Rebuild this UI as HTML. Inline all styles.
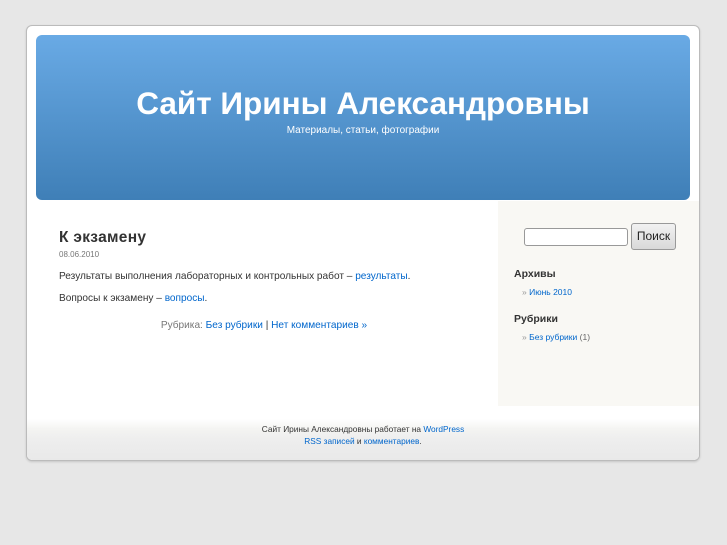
<!DOCTYPE html>
<html><head><meta charset="utf-8"><style>
body{margin:0;background:#e7e7e7;font-family:"Liberation Sans","DejaVu Sans",sans-serif;width:727px;height:545px;overflow:hidden;position:relative}
#page{position:absolute;left:26px;top:25px;width:672px;height:434px;background:#fff;border:1px solid #bbb;border-radius:6px;box-shadow:0 1px 2px rgba(0,0,0,.15);overflow:hidden}
#header{position:absolute;left:9px;top:9px;width:654px;height:165px;border-radius:6px;background:linear-gradient(#69aae5,#3f7fb7)}
#header h1{margin:0;position:absolute;top:50px;width:100%;text-align:center;color:#fff;font-size:31.5px;font-weight:bold}
#header .d{position:absolute;top:90px;width:100%;text-align:center;color:#fff;font-size:10px}
#side{position:absolute;left:471px;top:175px;width:201px;height:205px;background:#f9f8f4}
#foot{position:absolute;left:0;top:393px;width:672px;height:41px;background:linear-gradient(#fff 0,#f4f4f2 10px,#eee 20px,#e9e9e9);font-size:8.3px;text-align:center;color:#333;line-height:12px;padding-top:4px;box-sizing:border-box}
a{color:#0066cc;text-decoration:none}
.c{position:absolute;font-size:10.1px;color:#333}
h2{position:absolute;margin:0;font-size:15.5px;color:#333;left:32px;top:203px;letter-spacing:.3px}
h3{position:absolute;margin:0;font-size:10.5px;color:#333}
</style></head><body>
<div id="page">
<div id="header"><h1>Сайт Ирины Александровны</h1><div class="d">Материалы, статьи, фотографии</div></div>
<h2>К экзамену</h2>
<div class="c" style="left:32px;top:224px;font-size:8px;color:#777">08.06.2010</div>
<div class="c" style="left:32px;top:245px">Результаты выполнения лабораторных и контрольных работ – <a>результаты</a>.</div>
<div class="c" style="left:32px;top:267px">Вопросы к экзамену – <a>вопросы</a>.</div>
<div class="c" style="left:32px;width:410px;text-align:center;top:294px;color:#777">Рубрика: <a>Без рубрики</a> <span style="color:#333">|</span> <a>Нет комментариев »</a></div>
<div id="side">
<div style="position:absolute;left:26px;top:27px;width:102px;height:16px;border:1px solid #999;border-radius:3px;background:#fff"></div>
<div style="position:absolute;left:133px;top:22px;width:43px;height:25px;border:1px solid #999;border-radius:3px;background:linear-gradient(#f2f2f2,#d9d9d9);font-size:12px;line-height:25px;text-align:center;color:#222">Поиск</div>
<h3 style="left:16px;top:67px">Архивы</h3>
<div class="c" style="left:24px;top:86px;font-size:8.5px"><span style="color:#999">»</span> <a>Июнь 2010</a></div>
<h3 style="left:16px;top:112px">Рубрики</h3>
<div class="c" style="left:24px;top:131px;font-size:8.5px"><span style="color:#999">»</span> <a>Без рубрики</a> <span style="color:#666">(1)</span></div>
</div>
<div id="foot">Сайт Ирины Александровны работает на <a>WordPress</a><br><a>RSS записей</a> и <a>комментариев</a>.</div>
</div>
</body></html>
